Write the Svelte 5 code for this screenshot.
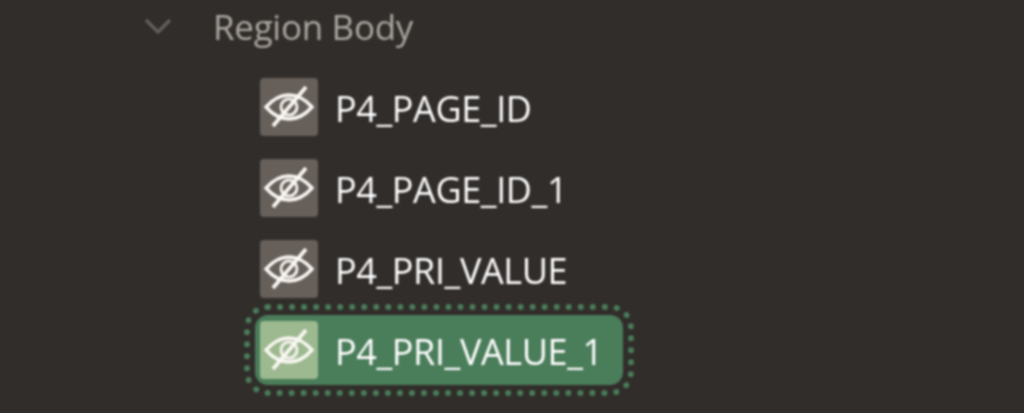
<script lang="ts">
  const items = [
    { name: 'P4_PAGE_ID', selected: false },
    { name: 'P4_PAGE_ID_1', selected: false },
    { name: 'P4_PRI_VALUE', selected: false },
    { name: 'P4_PRI_VALUE_1', selected: true },
  ];
</script>

<div class="tree">
  <div class="group">
    <svg class="chevron" viewBox="0 0 28 16" width="28" height="16" aria-hidden="true">
      <path d="M2 2 L14 14 L26 2" fill="none" stroke="#625e5a" stroke-width="3.4" />
    </svg>
    <span class="group-label">Region Body</span>
  </div>

  <ul class="items">
    {#each items as item}
      <li class="item" class:selected={item.selected}>
        <span class="badge">
          <svg viewBox="0 0 50 50" width="50" height="50" aria-hidden="true">
            <path d="M2 25 C10 16 18 13 25 13 C32 13 40 16 48 25 C40 34 32 37 25 37 C18 37 10 34 2 25 Z" fill="none" stroke="#fbf8f3" stroke-width="3.4" />
            <circle cx="25" cy="25" r="8" fill="none" stroke="#f6f3ee" stroke-width="3" />
            <path d="M9 44 L42 5" fill="none" stroke="#fbf8f3" stroke-width="3.8" />
          </svg>
        </span>
        <span class="name">{item.name}</span>
      </li>
    {/each}
  </ul>
</div>

<style>
:global(body) {
  margin: 0;
  background: #312d2a;
}

.tree {
  height: 413px;
  overflow: hidden;
  box-sizing: border-box;
  padding-top: 5px;
  background: #312d2a;
  font-family: "Open Sans", "Noto Sans", sans-serif;
  filter: blur(0.9px);
}

.group {
  display: flex;
  align-items: center;
  height: 42px;
  padding-left: 144px;
}

.chevron {
  flex-shrink: 0;
  margin-right: 41px;
}

.group-label {
  color: #aaa59f;
  font-size: 35px;
  letter-spacing: -0.3px;
}

.items {
  list-style: none;
  margin: 0;
  padding: 25px 0 0 255px;
  display: flex;
  flex-direction: column;
  gap: 11px;
}

.item {
  display: flex;
  align-items: center;
  gap: 17px;
  box-sizing: border-box;
  width: 368px;
  height: 70px;
  padding-left: 5px;
  border-radius: 13px;
}

.item.selected {
  background: #4a7d5a;
  outline: 6px dotted #4a7d5a;
  outline-offset: 5px;
}

.badge {
  display: flex;
  align-items: center;
  justify-content: center;
  width: 58px;
  height: 58px;
  flex-shrink: 0;
  border-radius: 4px;
  background: #665f5a;
}

.selected .badge {
  background: #9cb98f;
}

.name {
  color: #ffffff;
  font-size: 36px;
  font-weight: 500;
  letter-spacing: -0.4px;
  padding-top: 2px;
  white-space: nowrap;
}
</style>
